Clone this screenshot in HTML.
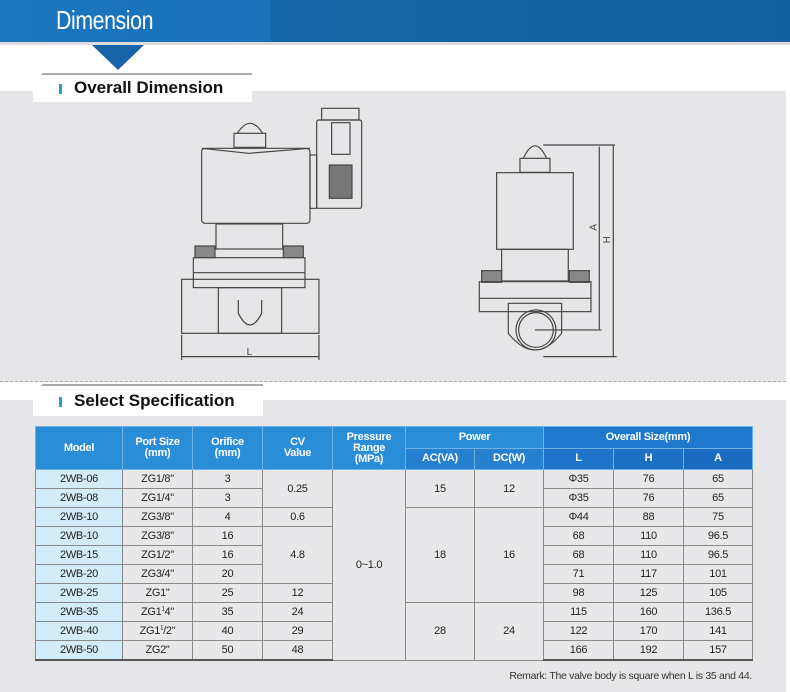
<!DOCTYPE html>
<html><head><meta charset="utf-8"><style>
body{margin:0;width:790px;height:692px;background:#fff;position:relative;overflow:hidden;font-family:"Liberation Sans",sans-serif}
.abs{position:absolute}
.banner{left:0;top:0;width:790px;height:42px;background:linear-gradient(90deg,#1b76bf 0,#1a72bb 270px,#1565a8 272px,#14609f 790px);border-bottom:3px solid #dcdcdc}
.banner span{position:absolute;left:56px;top:5px;color:#fff;font-size:26px;transform:scaleX(0.82);transform-origin:left top;letter-spacing:-0.5px}
.panel{background:#e6e6e8;left:0;width:786px}
.tab{background:#fff;box-shadow:1px 1px 2px #999;border-top:2px solid #aaa;clip-path:polygon(10px 0,100% 0,100% 100%,0 100%,0 10px)}
.tab b{position:absolute;left:41px;top:3px;font-size:17px;color:#111}
.tab i{position:absolute;left:26px;width:3px;height:10px;background:#2a9ad6}
table{position:absolute;left:35px;top:426px;border-collapse:collapse;font-size:11px;color:#222}
td,th{text-align:center;padding:0;border:1px solid #8a8a8a;height:18px;background:#e8e8ea;letter-spacing:-0.3px}
th{background:#2a8dd8;color:#fff;font-size:11px;border:1px solid #6fb3e6;line-height:11px}
tr td:first-child.m{background:#d3ecf9}
</style></head><body>
<div class="abs banner"><span>Dimension</span></div>
<div class="abs" style="left:92px;top:45px;width:0;height:0;border-left:26px solid transparent;border-right:26px solid transparent;border-top:25px solid #1765a8"></div>
<div class="abs panel" style="top:91px;height:290px;border-bottom:1px dashed #aaa"></div>
<div class="abs tab" style="left:33px;top:73px;width:219px;height:27px"><i style="top:9px"></i><b>Overall Dimension</b></div>
<div class="abs panel" style="top:400px;height:292px"></div>
<div class="abs tab" style="left:33px;top:384px;width:230px;height:30px"><i style="top:11px"></i><b style="top:5px">Select Specification</b></div>

<svg class="abs" style="left:160px;top:100px" width="460" height="270" viewBox="0 0 460 270" fill="none" stroke="#444" stroke-width="3.5">
<g transform="scale(0.3333)">
<rect x="125" y="145" width="325" height="225" rx="10" fill="#e6e6e8"/>
<path d="M125 145 L265 160 L450 145"/>
<rect x="222" y="100" width="95" height="42" />
<path d="M232 100 Q270 40 308 100"/>
<rect x="450" y="165" width="20" height="160"/>
<rect x="470" y="60" width="135" height="265" rx="6"/>
<rect x="485" y="25" width="112" height="35"/>
<rect x="515" y="68" width="55" height="95"/>
<rect x="508" y="195" width="68" height="100" fill="#777"/>
<rect x="168" y="372" width="200" height="75"/>
<rect x="105" y="438" width="60" height="35" fill="#888"/><rect x="370" y="438" width="60" height="35" fill="#888"/>
<rect x="100" y="473" width="335" height="90"/>
<path d="M100 518 H435"/>
<rect x="65" y="538" width="412" height="162"/>
<rect x="175" y="563" width="190" height="137"/>
<path d="M235 600 v40 q35 70 70 0 v-40"/>
<path d="M65 705 V780 M477 705 V780 M67 770 H475"/>
<text x="260" y="765" font-size="30" fill="#444" stroke="none">L</text>
<rect x="1010" y="218" width="230" height="230"/>
<rect x="1080" y="175" width="90" height="42"/>
<path d="M1090 175 Q1125 100 1160 175"/>
<rect x="1025" y="448" width="200" height="95"/>
<rect x="965" y="512" width="60" height="35" fill="#888"/><rect x="1228" y="512" width="60" height="35" fill="#888"/>
<rect x="958" y="545" width="335" height="90"/>
<path d="M958 595 H1293"/>
<path d="M1045 610 V700 Q1125 800 1205 700 V610 Z"/>
<circle cx="1128" cy="690" r="60"/><circle cx="1128" cy="690" r="52"/>
<path d="M1150 135 H1365 M1125 690 H1325 M1150 770 H1370 M1318 140 V688 M1360 135 V770"/>
<text x="1308" y="410" font-size="30" fill="#444" stroke="none" transform="rotate(-90 1300 400)">A</text>
<text x="1355" y="445" font-size="30" fill="#444" stroke="none" transform="rotate(-90 1345 440)">H</text>
</g></svg>

<table>
<colgroup><col width="87"><col width="70"><col width="70"><col width="70"><col width="73"><col width="69"><col width="69"><col width="70"><col width="70"><col width="69"></colgroup>
<tr><th rowspan="2" style="height:42px">Model</th><th rowspan="2">Port Size<br>(mm)</th><th rowspan="2">Orifice<br>(mm)</th><th rowspan="2">CV<br>Value</th><th rowspan="2">Pressure<br>Range<br>(MPa)</th><th colspan="2" style="height:20px">Power</th><th colspan="3" style="background:#1e78cc">Overall Size(mm)</th></tr>
<tr><th style="height:20px;background:#2580d0">AC(VA)</th><th style="background:#2580d0">DC(W)</th><th style="background:#1e74c8">L</th><th style="background:#1c70c4">H</th><th style="background:#1a6cc0">A</th></tr>
<tr><td class="m">2WB-06</td><td>ZG1/8"</td><td>3</td><td rowspan="2">0.25</td><td rowspan="10">0~1.0</td><td rowspan="2">15</td><td rowspan="2">12</td><td>Φ35</td><td>76</td><td>65</td></tr>
<tr><td class="m">2WB-08</td><td>ZG1/4"</td><td>3</td><td>Φ35</td><td>76</td><td>65</td></tr>
<tr><td class="m">2WB-10</td><td>ZG3/8"</td><td>4</td><td>0.6</td><td rowspan="5">18</td><td rowspan="5">16</td><td>Φ44</td><td>88</td><td>75</td></tr>
<tr><td class="m">2WB-10</td><td>ZG3/8"</td><td>16</td><td rowspan="3">4.8</td><td>68</td><td>110</td><td>96.5</td></tr>
<tr><td class="m">2WB-15</td><td>ZG1/2"</td><td>16</td><td>68</td><td>110</td><td>96.5</td></tr>
<tr><td class="m">2WB-20</td><td>ZG3/4"</td><td>20</td><td>71</td><td>117</td><td>101</td></tr>
<tr><td class="m">2WB-25</td><td>ZG1"</td><td>25</td><td>12</td><td>98</td><td>125</td><td>105</td></tr>
<tr><td class="m">2WB-35</td><td>ZG1<sup style="font-size:6px">1</sup>4"</td><td>35</td><td>24</td><td rowspan="3">28</td><td rowspan="3">24</td><td>115</td><td>160</td><td>136.5</td></tr>
<tr><td class="m">2WB-40</td><td>ZG1<sup style="font-size:6px">1</sup>/2"</td><td>40</td><td>29</td><td>122</td><td>170</td><td>141</td></tr>
<tr><td class="m" style="border-bottom:2px solid #555">2WB-50</td><td style="border-bottom:2px solid #555">ZG2"</td><td style="border-bottom:2px solid #555">50</td><td style="border-bottom:2px solid #555">48</td><td style="border-bottom:2px solid #555">166</td><td style="border-bottom:2px solid #555">192</td><td style="border-bottom:2px solid #555">157</td></tr>
</table>
<div class="abs" style="right:38px;top:670px;font-size:10.5px;color:#333;letter-spacing:-0.3px">Remark: The valve body is square when L is 35 and 44.</div>
</body></html>
